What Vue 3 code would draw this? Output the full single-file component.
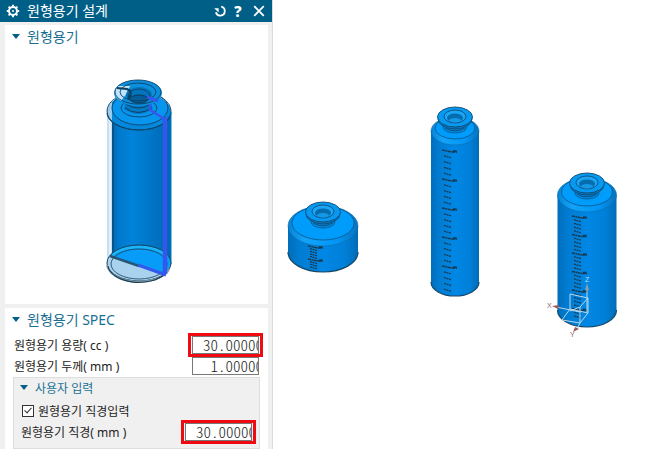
<template>
  <div class="workspace">
    <section class="dialog">
      <header class="title-bar">
        <svg class="gear" viewBox="0 0 14 14" width="14" height="14">
          <g stroke="#fff" stroke-width="2">
            <path v-for="a in [0, 45, 90, 135]" :key="a" d="M7 0.8V13.2" :transform="`rotate(${a} 7 7)`" />
          </g>
          <circle cx="7" cy="7" r="4" fill="#005f87" stroke="#fff" stroke-width="2" />
          <circle cx="7" cy="7" r="1" fill="#fff" />
        </svg>
        <h1>원형용기 설계</h1>
        <div class="actions">
          <button type="button" aria-label="Reset">
            <svg viewBox="0 0 14 14" width="14" height="14">
              <path d="M8.2 2.7A4.5 4.5 0 1 1 2.9 8.2" fill="none" stroke="#fff" stroke-width="1.8" />
              <path d="M1.2 4.2H5.6V8.6Z" fill="#fff" />
            </svg>
          </button>
          <button type="button" class="help" aria-label="Help">?</button>
          <button type="button" aria-label="Close">
            <svg viewBox="0 0 14 14" width="14" height="14">
              <path d="M2.2 2.2 11.8 11.8M11.8 2.2 2.2 11.8" stroke="#fff" stroke-width="1.8" />
            </svg>
          </button>
        </div>
      </header>

      <div class="groups">
        <section class="card">
          <button type="button" class="group-title"><i class="caret"></i>원형용기</button>
          <svg class="preview" viewBox="5 47 263 257">
            <defs>
              <linearGradient id="section-body">
                <stop offset="0" stop-color="#0068b5" />
                <stop offset=".12" stop-color="#0079cc" />
                <stop offset=".35" stop-color="#0083da" />
                <stop offset=".7" stop-color="#0074c4" />
                <stop offset="1" stop-color="#0067b0" />
              </linearGradient>
            </defs>
            <!-- Glass wall -->
            <path d="M107 112V264A32 18 0 0 0 171 264V112Z" fill="#c9dfef" />
            <path d="M110 112V260" stroke="#e2f0fa" stroke-width="2" />
            <!-- Cut body -->
            <path d="M112 112V262H171V112Z" fill="url(#section-body)" />
            <path d="M113 112V257" stroke="#075487" stroke-width="2" />
            <!-- Floor -->
            <ellipse cx="139" cy="264" rx="32" ry="18" fill="#a9d2ef" />
            <path d="M110 256A32 18 0 0 1 171 264L165 275Z" fill="#069cf7" />
            <path d="M111 257A29 14 0 0 1 167 257" fill="none" stroke="#19b4fa" stroke-width="3" />
            <path d="M110 256 139 266" stroke="#265775" stroke-width="2.4" />
            <g fill="none" stroke="#193f58">
              <ellipse cx="139" cy="263" rx="32" ry="18" />
              <ellipse cx="139" cy="264" rx="28" ry="15" stroke-width=".8" />
              <path d="M107 265A32 18 0 0 0 169 270" stroke="#8fa6b4" stroke-width="2" />
              <path d="M108 266A31 18 0 0 0 165 274" stroke-width="1.2" />
            </g>
            <!-- Shoulder -->
            <ellipse cx="139" cy="112" rx="32" ry="19" fill="#0587dc" />
            <ellipse cx="140" cy="109" rx="28" ry="16" fill="#0795ee" />
            <path d="M107 112A32 19 0 0 1 112 102V122Q108 118 107 112Z" fill="#9dcbea" />
            <g fill="none" stroke="#0d4265" stroke-width=".9">
              <ellipse cx="139" cy="111" rx="32" ry="19" />
              <ellipse cx="140" cy="108" rx="28" ry="17" />
              <path d="M107 113A32 17 0 0 0 171 113" />
              <ellipse cx="139" cy="108" rx="18" ry="9" />
            </g>
            <!-- Neck -->
            <path d="M124 99Q126 106 124 109Q138 119 153 109Q150 104 153 99Z" fill="#0678c2" />
            <path d="M125 108Q138 117 152 108M126 104Q138 112 151 104" fill="none" stroke="#0b4167" />
            <ellipse cx="138" cy="93" rx="24" ry="13" fill="#0b8fdf" />
            <path d="M118 86A24 13 0 0 0 121 101L127 93 130 86Z" fill="#bfe3f8" />
            <ellipse cx="139" cy="95" rx="13" ry="8" fill="#0475bd" />
            <ellipse cx="139" cy="99" rx="9" ry="5" fill="#045e9b" />
            <g fill="none" stroke="#0b4063" stroke-width=".9">
              <ellipse cx="138" cy="92" rx="23" ry="12" />
              <ellipse cx="138" cy="92" rx="18" ry="9" />
              <ellipse cx="139" cy="96" rx="11" ry="7" />
              <path d="M130 98A10 5 0 0 1 148 98" />
              <path d="M117 88 127 89Q134 92 128 99" stroke-width="2" />
            </g>
            <!-- Profile curve -->
            <g fill="none" stroke="#3458ef">
              <path d="M147 97 158 101" stroke-width="3" />
              <path d="M150 104V110L163 118 165 123" stroke-width="2.4" />
              <path d="M165 117V274" stroke-width="4.4" />
              <path d="M138 265 166 275" stroke-width="3" />
            </g>
            <path d="M171 112V264" stroke="#0878bf" stroke-width="1" />
          </svg>
        </section>

        <section class="card">
          <button type="button" class="group-title"><i class="caret"></i>원형용기 SPEC</button>
          <div class="spec">
            <div class="field">
              <label for="volume">원형용기 용량( cc )</label>
              <span class="mark"><span class="value"><input id="volume" v-model="volume" type="text" /></span></span>
            </div>
            <div class="field">
              <label for="thickness">원형용기 두께( mm )</label>
              <span class="mark off"><span class="value"><input id="thickness" v-model="thickness" type="text" /></span></span>
            </div>
            <div class="sub-group">
              <button type="button" class="group-title small"><i class="caret"></i>사용자 입력</button>
              <label class="check"><input v-model="useDiameter" type="checkbox" />원형용기 직경입력</label>
              <div class="field">
                <label for="diameter">원형용기 직경( mm )</label>
                <span class="mark"><span class="value"><input id="diameter" v-model="diameter" type="text" /></span></span>
              </div>
            </div>
          </div>
        </section>
      </div>
    </section>

    <main class="viewport">
      <svg viewBox="273 0 377 449">
        <defs>
          <linearGradient id="body">
            <stop offset="0" stop-color="#006dba" />
            <stop offset=".15" stop-color="#007bd0" />
            <stop offset=".5" stop-color="#0087e5" />
            <stop offset=".8" stop-color="#0080d9" />
            <stop offset="1" stop-color="#006cb8" />
          </linearGradient>
          <linearGradient id="shoulder">
            <stop offset="0" stop-color="#0783d5" />
            <stop offset=".25" stop-color="#12a4fa" />
            <stop offset=".7" stop-color="#0295f6" />
            <stop offset="1" stop-color="#0873bd" />
          </linearGradient>
        </defs>
        <g v-for="b in bottles" :key="b.x">
          <path :d="bodyPath(b)" fill="url(#body)" />
          <path :d="basePath(b)" fill="none" stroke="#14486b" stroke-width="1.2" />
          <ellipse :cx="b.x" :cy="b.top" :rx="b.rx" :ry="b.ry" fill="url(#shoulder)" stroke="#0b6aa9" stroke-width=".6" />
          <ellipse :cx="b.x" :cy="b.top - 3" :rx="b.rx - 4" :ry="b.ry - 3" fill="#009cfb" stroke="#0c5487" stroke-width=".8" />
          <path v-for="(t, i) in ticks(b)" :key="i" :d="t.d" fill="none" stroke="#183a50"
            :stroke-width="t.long ? 1.5 : 1.2" :stroke-dasharray="t.long ? '3 .5 2 .4' : '2 .6'" />
          <g :transform="`translate(${b.x},${b.neck})`">
            <ellipse cy="10" rx="12" ry="6" fill="#008ae4" stroke="#0a568a" stroke-width=".8" />
            <path d="M-13 4Q-8 7-10 11Q0 17 10 11Q8 7 13 4Z" fill="#067bc9" />
            <path d="M-9 8Q0 14 9 8M-10 11Q0 17 10 11" fill="none" stroke="#0b527f" stroke-width=".9" />
            <ellipse cy="2" rx="17" ry="10" fill="#0874bd" stroke="#104b73" stroke-width=".8" />
            <ellipse rx="17.5" ry="10" fill="#0699f2" stroke="#124a6e" stroke-width=".9" />
            <ellipse cy="-.5" rx="11" ry="6.5" fill="#1aa5f5" stroke="#104d77" stroke-width=".9" />
            <ellipse cy="1" rx="8" ry="4.5" fill="#056cae" />
            <ellipse cy="3.3" rx="6" ry="2.2" fill="#1599e7" />
          </g>
        </g>

        <!-- Coordinate triad -->
        <g fill="none" stroke="#b8d8ec" stroke-width="1">
          <path d="M570 294 588 298V313L580 323 562 320 570 309ZM570 309 588 313M580 307V323M570 311 580 307 588 298" />
          <path d="M587 312V288M580 312 556 307M580 323 577 329" />
        </g>
        <path d="M587 283 589 290H585Z" fill="#8d9daa" />
        <path d="M552 306 559 305 558 309Z" fill="#9b5a58" />
        <path d="M573 332 575 327 579 329Z" fill="#9b5a58" />
        <g class="axis">
          <text x="585" y="282" fill="#b9dff5">Z</text>
          <text x="547" y="308" fill="#926866">X</text>
          <text x="570" y="337" fill="#926866">Y</text>
        </g>
      </svg>
    </main>
  </div>
</template>

<script setup>
import { ref } from 'vue'

const volume = ref('30.00000')
const thickness = ref('1.00000')
const diameter = ref('30.00000')
const useDiameter = ref(true)

// neck / top / base are the centre heights of the rim, shoulder and floor ellipses
const bottles = [
  { x: 323, neck: 212, top: 226, base: 252, rx: 35, ry: 20, first: 247, step: 2.6, count: 9, scale: -12 },
  { x: 455, neck: 117, top: 131, base: 282, rx: 24, ry: 14, first: 151, step: 5.8, count: 25, scale: -10 },
  { x: 587, neck: 183, top: 195, base: 310, rx: 29.5, ry: 17, first: 217, step: 3.7, count: 28, scale: -12 },
]

function bodyPath(b) {
  return `M${b.x - b.rx} ${b.top}V${b.base}A${b.rx} ${b.ry} 0 0 0 ${b.x + b.rx} ${b.base}V${b.top}Z`
}

function basePath(b) {
  return `M${b.x - b.rx} ${b.base}A${b.rx} ${b.ry} 0 0 0 ${b.x + b.rx} ${b.base}`
}

function ticks(b) {
  return Array.from({ length: b.count }, (_, i) => {
    const long = i % 5 === 0
    const x = b.x + b.scale
    const y = b.first + i * b.step
    return {
      long,
      d: long ? `M${x - 3} ${y - 1}L${x + 7} ${y + 1}M${x + 7} ${y + 1}h5M${x + 8} ${y}h4` : `M${x - 1} ${y - 1}L${x + 6} ${y + 1}`,
    }
  })
}
</script>

<style>
body { margin: 0; }
</style>

<style scoped>
.workspace {
  display: grid;
  grid-template-columns: 42% 1fr;
  grid-template-rows: 100%;
  height: 100vh;
  overflow: hidden;
  background: #fff;
  color: #222;
  font-family: "Noto Sans", "Noto Sans CJK KR", sans-serif;
  font-size: 12px;
}
button {
  border: 0;
  padding: 0;
  background: none;
  font-family: inherit;
}

/* ── Dialog ─────────────────────────────────────────────────────── */
.dialog {
  box-sizing: border-box;
  min-width: 0;
  overflow: hidden;
  background: #f0f0f0;
  border-right: 1px solid #dcdcdc;
}
.title-bar {
  display: flex;
  align-items: center;
  height: 22px;
  margin-right: -1px;
  padding: 0 7px 0 6px;
  background: #005f87;
  color: #fff;
}
.title-bar h1 {
  flex: 1;
  margin: 0 0 0 7px;
  font-size: 14px;
  font-weight: 400;
  line-height: 20px;
}
.actions { display: flex; gap: 4px; }
.actions button { display: flex; width: 14px; height: 22px; align-items: center; justify-content: center; color: #fff; }
.actions button:last-child { margin-left: 3px; }
.actions .help { font-size: 15px; font-weight: 800; }

.groups { display: flex; flex-direction: column; gap: 4px; padding: 3px 4px 0 5px; }
.card { background: #fff; }
.group-title {
  display: flex;
  align-items: center;
  gap: 7px;
  height: 22px;
  padding-left: 7px;
  color: #1a7093;
  font-size: 14px;
  font-weight: 400;
}
.caret {
  border: 4px solid transparent;
  border-top: 5px solid #005f87;
  border-bottom: 0;
}
.preview { display: block; width: 100%; }

/* ── Fields ─────────────────────────────────────────────────────── */
.spec { padding: 4px 0 8px; }
.field {
  display: flex;
  align-items: center;
  justify-content: space-between;
  height: 21px;
  padding: 0 5px 0 9px;
}
.mark {
  position: relative;
  box-sizing: border-box;
  width: 75px;
  padding: 0 1px;
  border: 3px solid #f00b12;
  z-index: 1;
}
.mark.off { border-color: transparent; z-index: 0; }
.value {
  display: block;
  box-sizing: border-box;
  height: 18px;
  overflow: hidden;
  border: 1px solid #777;
  background: #fff;
}
.value input {
  display: block;
  box-sizing: border-box;
  width: calc(100% + 5px);
  height: 16px;
  border: 0;
  padding: 0;
  outline: 0;
  background: none;
  color: #222;
  font-family: "Noto Sans CJK KR", monospace;
  font-feature-settings: "hwid";
  font-size: 15px;
  font-weight: 300;
  line-height: 16px;
  text-align: right;
}
.sub-group {
  margin: 1px 8px 0;
  padding-bottom: 6px;
  border: 1px solid #ddd;
  background: #f0f0f0;
}
.small { height: 19px; padding-left: 6px; font-size: 12px; }
.sub-group .field { padding-left: 7px; padding-right: 3px; }
.check {
  display: flex;
  align-items: center;
  gap: 4px;
  height: 20px;
  padding: 4px 0 0 8px;
}
.check input {
  appearance: none;
  box-sizing: border-box;
  width: 12px;
  height: 12px;
  margin: 0;
  border: 1px solid #333;
  background: #fff;
}
.check input:checked::after {
  content: "";
  display: block;
  width: 3px;
  height: 6px;
  margin: 0 0 0 3px;
  border: solid #333;
  border-width: 0 1px 1px 0;
  transform: rotate(42deg);
}

/* ── Viewport ───────────────────────────────────────────────────── */
.viewport { min-width: 0; }
.viewport svg { display: block; width: 100%; height: 100%; }
.axis { font-family: "Liberation Sans", sans-serif; font-size: 7px; }
</style>
